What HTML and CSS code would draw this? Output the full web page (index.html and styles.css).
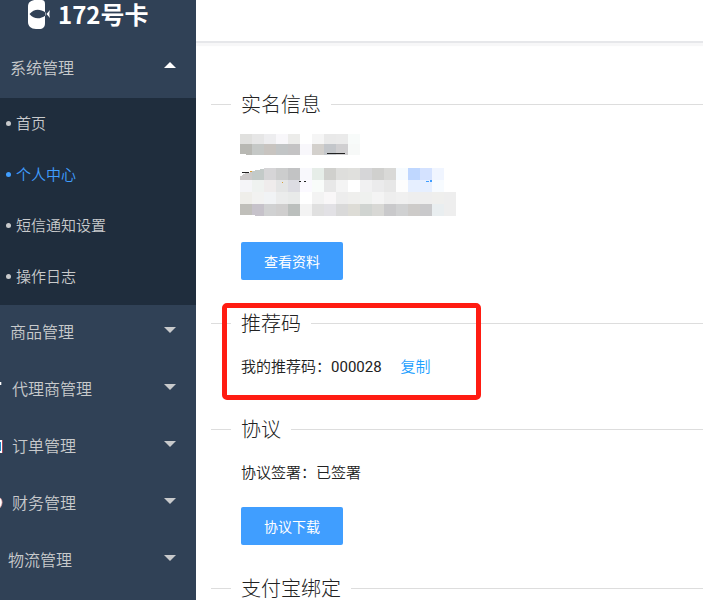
FILE: index.html
```
<!DOCTYPE html>
<html lang="zh-CN">
<head>
<meta charset="utf-8">
<title>个人中心</title>
<link rel="stylesheet" href="styles.css">
</head>
<body>
<div class="app">
  <aside class="sidebar">
    <div class="logo">
      <svg class="logo-mark" width="24" height="30" viewBox="0 0 24 30">
        <path fill="#fff" fill-rule="evenodd" d="M1 7C1 2 4 0 9 0h5c3 0 4 1 4 4v19c0 4-2 6-6 6H9c-5 0-8-3-8-7zM2.500 14C7 19.500 13 19.500 18.500 15.500v-3C13 8.500 7 8.500 2.500 14zM19.500 14l3.500-4c-.8 3-.8 5 0 8z"/>
      </svg>
      <span class="logo-text">172号卡</span>
    </div>
    <div class="menu-title open"><span>系统管理</span><i class="arrow up"></i></div>
    <ul class="submenu">
      <li>首页</li>
      <li class="active">个人中心</li>
      <li>短信通知设置</li>
      <li>操作日志</li>
    </ul>
    <div class="menu-title"><span>商品管理</span><i class="arrow"></i></div>
    <div class="menu-title inset"><svg class="edge" width="4" height="20" viewBox="0 0 4 20"><path fill="#fff" d="M0 4h1.300v3H0z"/></svg><span>代理商管理</span><i class="arrow"></i></div>
    <div class="menu-title inset"><svg class="edge" width="4" height="20" viewBox="0 0 4 20"><path fill="#1c86c8" d="M0 7h1v9H0z"/><path fill="#fff" d="M0 5h2v13H0v-2h1V7H0z"/><path fill="#d04a5c" d="M2 5h.7v13H2z"/></svg><span>订单管理</span><i class="arrow"></i></div>
    <div class="menu-title inset"><svg class="edge" width="4" height="20" viewBox="0 0 4 20"><path fill="#fff" stroke="#d98282" stroke-width=".7" d="M-2 5c6 1 5 10 0 12z"/></svg><span>财务管理</span><i class="arrow"></i></div>
    <div class="menu-title outset"><span>物流管理</span><i class="arrow"></i></div>
  </aside>
  <main class="main">
    <header class="topbar"></header>
    <section class="field identity">
      <h2><span>实名信息</span></h2>
      <svg class="mosaic" width="216" height="84" viewBox="0 0 216 84" shape-rendering="crispEdges"></svg>
      <button class="btn">查看资料</button>
    </section>
    <section class="field referral">
      <h2><span>推荐码</span></h2>
      <p>我的推荐码：<span class="code">000028</span><a>复制</a></p>
    </section>
    <section class="field agreement">
      <h2><span>协议</span></h2>
      <p>协议签署：已签署</p>
      <button class="btn">协议下载</button>
    </section>
    <section class="field">
      <h2><span>支付宝绑定</span></h2>
    </section>
    <div class="highlight"></div>
  </main>
</div>
<script src="mosaic.js"></script>
</body>
</html>
```
FILE: styles.css
```
* { box-sizing: border-box; }
body {
  margin: 0;
  height: 600px;
  overflow: hidden;
  background: #fff;
  color: #222;
  font-family: "Noto Sans CJK SC", sans-serif;
  font-size: 15px;
  font-weight: 350;
}
.app { display: flex; height: 600px; overflow: hidden; }
.sidebar { position: relative; z-index: 1; width: 196px; flex: none; background: #304156; color: #c8cacc; overflow: hidden; }
.logo { display: flex; height: 41px; padding-left: 27px; }
.logo-mark { flex: none; }
.logo-text {
  margin-left: 7px;
  height: 28px;
  line-height: 28px;
  font-size: 24px;
  font-weight: 700;
  color: #fff;
}
.menu-title {
  position: relative;
  display: flex;
  align-items: center;
  justify-content: space-between;
  height: 57px;
  padding: 0 20px 5px 10px;
  font-size: 16px;
}
.menu-title.inset { padding-left: 12px; }
.menu-title.outset { padding-left: 8px; }
.edge { position: absolute; left: 0; top: 16px; }
.arrow {
  border: 6px solid transparent;
  border-top-color: #c8cacc;
  border-bottom: 0;
  margin-top: -2px;
}
.arrow.up {
  border-top: 0;
  border-bottom: 6px solid #fff;
  margin-top: -4px;
}
.submenu {
  margin: 0;
  padding: 0 0 3px;
  list-style: none;
  background: #1f2d3d;
}
.submenu li {
  display: flex;
  align-items: center;
  height: 51px;
  padding: 0 0 2px 6px;
}
.submenu li::before {
  content: "";
  width: 5px;
  height: 5px;
  margin: 2px 5px 0 0;
  border-radius: 50%;
  background: currentColor;
}
.submenu .active { color: #409eff; }
.main { position: relative; flex: 1; min-width: 0; }
.topbar {
  height: 41px;
  margin-bottom: 49px;
  box-shadow: 0 2px 0 #e6e7ea, 0 5px 1px #f7f7f8;
}
.field { margin-left: 15px; }
.field h2 {
  display: flex;
  align-items: center;
  gap: 10px;
  margin: 0;
  height: 29px;
  font-size: 20px;
  font-weight: 300;
  white-space: nowrap;
}
.field h2 span { padding-bottom: 2px; }
.field h2::before, .field h2::after {
  content: "";
  height: 1px;
  background: #ddd;
}
.field h2::before { width: 20px; }
.field h2::after { flex: 1; }
.field p { margin: 17px 0 0 30px; height: 22px; line-height: 22px; }
.code { font-family: Roboto, sans-serif; font-weight: 400; }
.field a { margin-left: 19px; color: #1e9fff; }
.mosaic { display: block; margin: 14px 0 0 29px; }
.btn {
  display: block;
  width: 102px;
  height: 38px;
  margin: 0 0 0 30px;
  padding: 0 0 1px;
  border: 0;
  border-radius: 2px;
  background: #409eff;
  color: #fff;
  font: 14px "Noto Sans CJK SC", sans-serif;
}
.identity { height: 219px; }
.identity .btn { margin-top: 25px; }
.referral { height: 106px; }
.agreement { height: 159px; }
.agreement .btn { margin-top: 24px; }
.highlight {
  position: absolute;
  left: 25.500px;
  top: 302.500px;
  width: 259px;
  height: 97px;
  border: 5px solid #ff1c12;
  border-radius: 5px;
}
```
FILE: mosaic.js
```
// Pixelated block that hides the personal details: [top, height, cell colours].
const rows = [
  [1, 10, "e0e0de e6e6e6 ededef f8f7fa ececea ffffff f5f5f5 e9e9e9 eaeaea f8fbfa"],
  [11, 11, "b8b8b3 c5c8c6 c8c4c0 c2c5c6 c4c3c4 f8f7fb d3d0cc c3c6ca d0cfd1 f7f9f8"],
  [35, 12, "cdcaca c3cac8 d6d5d7 cccdcd c2c3c4 f8f8fc e6ede8 d0d0cd dededc e0e0dd d6d6d8 d0d0ce d9d9d7 f6fbff bfd7ff d4e2ff f0f5ff"],
  [47, 12, "f5f5f8 eff2f0 efecec e4e5e5 dcdce2 fbf9ff f9fcfa e8e8e8 f4f4f4 ffffff f1f1f2 ebebec e7e7e7 fdfdfd e6efff e6efff f7fbff"],
  [59, 12, "efeeea f2f2f1 f1f3f5 ebecec e8eae9 ffffff f3f3f3 f9f7f8 ededed efefed eff1ef f4f4f4 eeeeee f0f0f0 eeeeee eeeeee efefed eeeeee"],
  [71, 12, "c0bfba c6c2ca d0d1d2 cfcece bbbfbd f3f3f3 e0e0e0 e2e1e5 d9d9d9 dddcd6 d0d4d1 d8d8d5 c9c9cb d0d1d2 cdcbc9 c9c9cb e9eef0 eeeeee"]
];
const svg = document.querySelector(".mosaic");
let cells = "";
for (const [y, h, colours] of rows) {
  colours.split(" ").forEach((c, i) => {
    cells += `<rect x="${i * 12}" y="${y}" width="12" height="${h}" fill="#${c}"/>`;
  });
}
cells += '<path fill="#fff" d="M0 35h24v1h-4v1h-5v1h-5v2H5v1H3v1H2v1H0zM0 21h6v1H0zM0 82h15v1H0z"/>';
cells += '<path fill="#222" d="M2 39h7v1H2zM87 20h18v1H87zM59 48h2v1h-2zM64 48h2v1h-2z"/>';
cells += '<path fill="#d7a03c" d="M10 38h2v1h-2zM42 49h1v1h-1z"/>';
cells += '<path fill="#409eff" d="M186 48h3v1h-3zM190 47h2v2h-2z"/>';
svg.innerHTML = cells;
```
